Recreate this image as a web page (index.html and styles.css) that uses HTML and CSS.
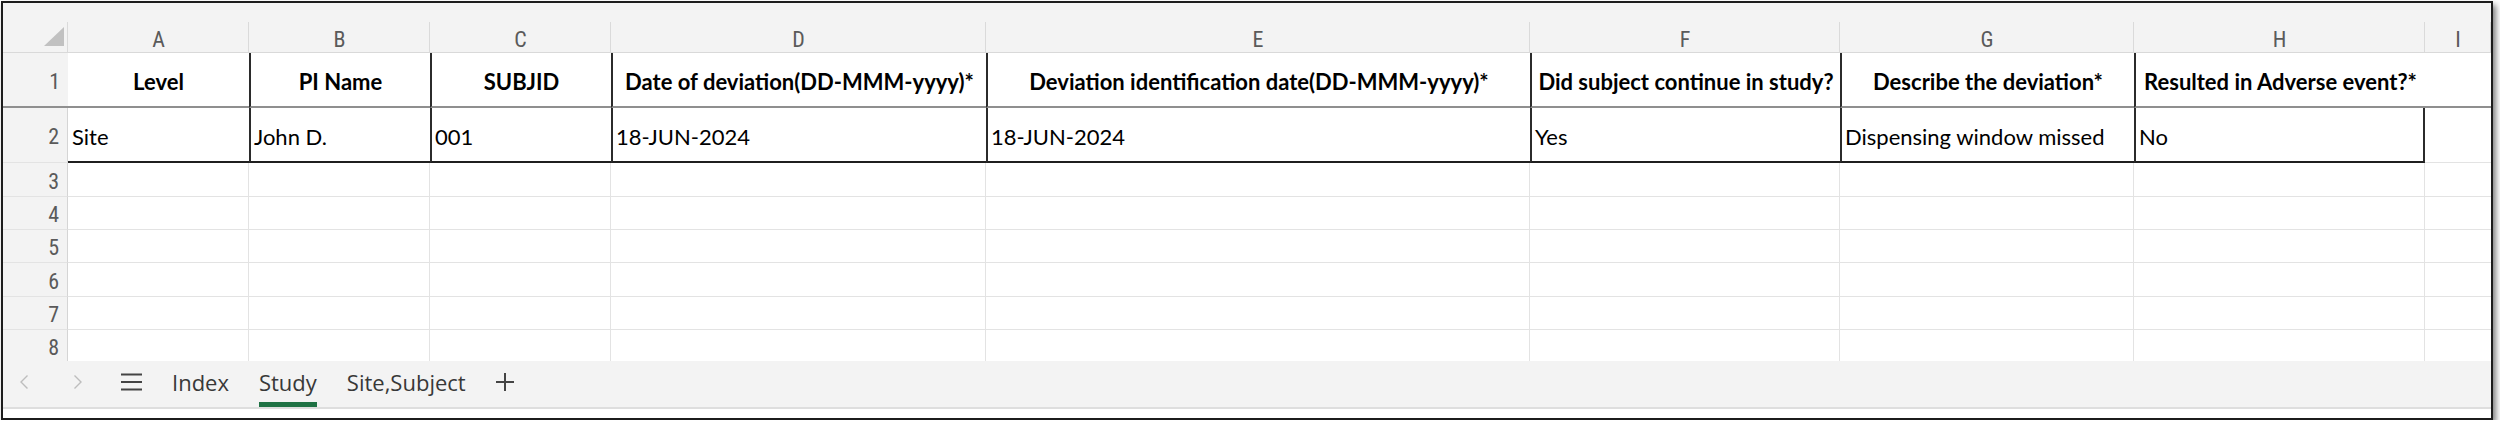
FILE: index.html
```html
<!DOCTYPE html>
<html lang="en">
<head>
<meta charset="utf-8">
<title>Study</title>
<link rel="stylesheet" href="styles.css">
</head>
<body>
<div class="window">
  <div class="sheet">
    <div class="colhead corner"><svg width="20" height="19" viewBox="0 0 20 19"><polygon points="20,0 20,19 0,19" fill="#c1c1c1"/></svg></div>
    <div class="colhead">A</div>
    <div class="colhead">B</div>
    <div class="colhead">C</div>
    <div class="colhead">D</div>
    <div class="colhead">E</div>
    <div class="colhead">F</div>
    <div class="colhead">G</div>
    <div class="colhead">H</div>
    <div class="colhead">I</div>

    <div class="rowhead fz">1</div>
    <div class="cell hdr fz">Level</div>
    <div class="cell hdr fz dl">PI Name</div>
    <div class="cell hdr fz dl">SUBJID</div>
    <div class="cell hdr fz dl">Date of deviation(DD-MMM-yyyy)*</div>
    <div class="cell hdr fz dl">Deviation identification date(DD-MMM-yyyy)*</div>
    <div class="cell hdr fz dl">Did subject continue in study?</div>
    <div class="cell hdr fz dl">Describe the deviation*</div>
    <div class="cell hdr fz dl">Resulted in Adverse event?*</div>
    <div class="cell fz"></div>

    <div class="rowhead">2</div>
    <div class="cell dat db">Site</div>
    <div class="cell dat db dl">John D.</div>
    <div class="cell dat db dl">001</div>
    <div class="cell dat db dl">18-JUN-2024</div>
    <div class="cell dat db dl">18-JUN-2024</div>
    <div class="cell dat db dl">Yes</div>
    <div class="cell dat db dl">Dispensing window missed</div>
    <div class="cell dat db dl dr">No</div>
    <div class="cell dat"></div>

    <div class="rowhead">3</div>
    <div class="cell"></div><div class="cell"></div><div class="cell"></div><div class="cell"></div><div class="cell"></div><div class="cell"></div><div class="cell"></div><div class="cell"></div><div class="cell last"></div>
    <div class="rowhead">4</div>
    <div class="cell"></div><div class="cell"></div><div class="cell"></div><div class="cell"></div><div class="cell"></div><div class="cell"></div><div class="cell"></div><div class="cell"></div><div class="cell last"></div>
    <div class="rowhead">5</div>
    <div class="cell"></div><div class="cell"></div><div class="cell"></div><div class="cell"></div><div class="cell"></div><div class="cell"></div><div class="cell"></div><div class="cell"></div><div class="cell last"></div>
    <div class="rowhead">6</div>
    <div class="cell"></div><div class="cell"></div><div class="cell"></div><div class="cell"></div><div class="cell"></div><div class="cell"></div><div class="cell"></div><div class="cell"></div><div class="cell last"></div>
    <div class="rowhead">7</div>
    <div class="cell"></div><div class="cell"></div><div class="cell"></div><div class="cell"></div><div class="cell"></div><div class="cell"></div><div class="cell"></div><div class="cell"></div><div class="cell last"></div>
    <div class="rowhead nb">8</div>
    <div class="cell nb"></div><div class="cell nb"></div><div class="cell nb"></div><div class="cell nb"></div><div class="cell nb"></div><div class="cell nb"></div><div class="cell nb"></div><div class="cell nb"></div><div class="cell nb last"></div>
  </div>

  <div class="tabbar">
    <span class="nav prev"><svg width="10" height="16" viewBox="0 0 10 16"><polyline points="8.5,1.5 2,8 8.5,14.5" fill="none" stroke="#bdbdbd" stroke-width="1.4"/></svg></span>
    <span class="nav next"><svg width="10" height="16" viewBox="0 0 10 16"><polyline points="1.5,1.5 8,8 1.5,14.5" fill="none" stroke="#bdbdbd" stroke-width="1.4"/></svg></span>
    <span class="nav menu"><svg width="22" height="18" viewBox="0 0 22 18"><path d="M0 1.5H21M0 9H21M0 16.5H21" stroke="#444" stroke-width="2"/></svg></span>
    <div class="tabs">
      <span class="tab">Index</span>
      <span class="tab active">Study</span>
      <span class="tab">Site,Subject</span>
      <span class="tab add"><svg width="18" height="18" viewBox="0 0 18 18"><path d="M9 0V18M0 9H18" stroke="#444" stroke-width="2"/></svg></span>
    </div>
  </div>
  <div class="foot"></div>
</div>
</body>
</html>
```

FILE: styles.css
```css
* { box-sizing: border-box; }

html, body {
  margin: 0;
  padding: 0;
  background: #ffffff;
}

.window {
  margin: 1px 0 0 1px;
  width: 2492px;
  height: 419px;
  border: 2px solid #1c1c1c;
  background: #ffffff;
  box-shadow: 3px 4px 6px rgba(0, 0, 0, 0.5);
  overflow: hidden;
}

.sheet {
  display: grid;
  grid-template-columns: 65px 181px 181px 181px 375px 544px 310px 294px 291px 1fr;
  grid-template-rows: 50px 55px 55px 34px 33px 33px 34px 33px 31px;
}

.colhead {
  display: flex;
  align-items: center;
  justify-content: center;
  padding-top: 24px;
  background: linear-gradient(#dadada, #dadada) right bottom / 1px 30px no-repeat, #f3f3f3;
  border-bottom: 1px solid #d9d9d9;
  font-family: "Liberation Sans Narrow", "Roboto Condensed", "Liberation Sans", sans-serif;
  font-size: 22px;
  color: #5a5a5a;
  line-height: 1;
}

.corner {
  justify-content: flex-end;
  align-items: flex-end;
  padding: 0 4px 6px 0;
}

.corner svg { display: block; }

.rowhead {
  display: flex;
  align-items: center;
  justify-content: flex-end;
  padding: 4px 8px 0 0;
  background: #f3f3f3;
  border-right: 1px solid #d5d5d5;
  border-bottom: 1px solid #e3e3e3;
  font-family: "Liberation Sans Narrow", "Roboto Condensed", "Liberation Sans", sans-serif;
  font-size: 22px;
  color: #5a5a5a;
  line-height: 1;
}

.cell {
  display: flex;
  align-items: center;
  padding: 5px 0 0 4px;
  background: #ffffff;
  border-right: 1px solid #e3e3e3;
  border-bottom: 1px solid #e3e3e3;
  font-family: Lato, "Open Sans", sans-serif;
  font-size: 22px;
  color: #000000;
  white-space: nowrap;
  line-height: 1.2;
}

.cell.last { border-right: 0; }

.hdr {
  justify-content: center;
  padding-left: 0;
  font-weight: 700;
}

/* frozen-pane divider below row 1 */
.fz {
  border-bottom: 2px solid #8f8f8f;
  border-right: 0;
}

.dat { border-right: 0; }

.dl { border-left: 2px solid #2b2b2b; padding-left: 3px; }
.hdr.dl { padding-left: 0; }

.dr { border-right: 2px solid #2b2b2b; }

.db { border-bottom: 2px solid #1f1f1f; }

.nb { border-bottom: 0; }

.tabbar {
  display: flex;
  align-items: stretch;
  height: 48px;
  padding-left: 16px;
  background: #f3f3f3;
  border-bottom: 2px solid #dedede;
}

.nav {
  display: flex;
  align-items: center;
  padding-bottom: 5px;
}

.nav svg { display: block; }

.next { margin-left: 44px; }
.menu { margin-left: 38px; }

.tabs {
  display: flex;
  align-items: stretch;
  gap: 30px;
  margin-left: 29px;
}

.tab {
  display: flex;
  align-items: center;
  border-bottom: 5px solid transparent;
  font-family: "Open Sans", "Noto Sans", sans-serif;
  font-size: 22px;
  color: #383838;
  line-height: 1;
}

.tab.active { border-bottom-color: #1f7244; }

.tab.add svg { display: block; }

.foot {
  height: 6px;
  background: #ffffff;
}
```
